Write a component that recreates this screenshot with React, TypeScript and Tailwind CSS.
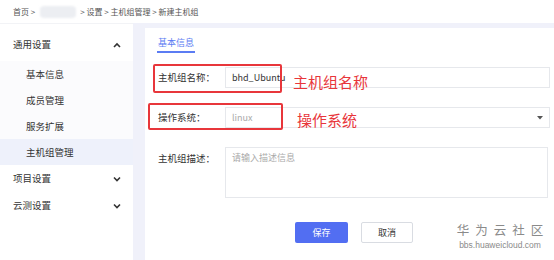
import React from "react";

const font = { fontFamily: '"Noto Sans CJK SC", "Noto Sans", sans-serif' };

function Chevron({ up }: { up?: boolean }) {
  return (
    <svg width="8" height="6" viewBox="0 0 8 6" className="text-[#333]">
      {up ? (
        <path d="M1 5 L4 2 L7 5" fill="none" stroke="currentColor" strokeWidth="1.6" />
      ) : (
        <path d="M1 1.5 L4 4.5 L7 1.5" fill="none" stroke="currentColor" strokeWidth="1.6" />
      )}
    </svg>
  );
}

export default function App() {
  return (
    <div style={font} className="w-[554px] h-[260px] bg-[#f0f1fa] overflow-hidden flex flex-col text-[#333]">
      {/* breadcrumb */}
      <div className="h-[23px] bg-white flex items-center pl-[13px] text-[8px] text-[#555] shrink-0 whitespace-nowrap">
        <span>首页 &gt;</span>
        <span className="ml-[5px] w-[36px] h-[12px] rounded-[4px] bg-[#eceef2] blur-[1px]" />
        <span className="ml-[4px]">&gt; 设置 &gt; 主机组管理 &gt; 新建主机组</span>
      </div>
      <div className="flex flex-1 min-h-0">
        {/* sidebar */}
        <div className="w-[133px] bg-white border-t border-[#f2f3f6] text-[9.5px] shrink-0 whitespace-nowrap">
          <div className="h-[33px] mt-[4px] flex items-center justify-between pl-[13px] pr-[12px]">
            <span>通用设置</span>
            <Chevron up />
          </div>
          <div className="bg-[#fbfbfd]">
            <div className="h-[26px] flex items-center pl-[26px]">基本信息</div>
            <div className="h-[26px] flex items-center pl-[26px]">成员管理</div>
            <div className="h-[26px] flex items-center pl-[26px]">服务扩展</div>
            <div className="h-[26px] flex items-center pl-[26px] bg-[#eef1fb]">主机组管理</div>
          </div>
          <div className="h-[27px] flex items-center justify-between pl-[13px] pr-[12px]">
            <span>项目设置</span>
            <Chevron />
          </div>
          <div className="h-[27px] flex items-center justify-between pl-[13px] pr-[12px]">
            <span>云测设置</span>
            <Chevron />
          </div>
        </div>
        {/* main */}
        <div className="flex-1 ml-[12px] mt-[5px] bg-white relative text-[9.5px] whitespace-nowrap">
          <div className="ml-[12px] mt-[9px] w-[38px] h-[16px] border-b-2 border-[#5b7cf3] text-[#5b7cf3] flex items-start justify-center leading-[11px] text-[9px]">
            基本信息
          </div>
          <div className="pl-[13px] pr-[4px]">
            <div className="flex items-center mt-[14px] h-[21px]">
              <div className="w-[67px]">主机组名称：</div>
              <div className="flex-1 h-[21px] border border-[#e6e8ec] flex items-center pl-[6px] text-[#333] text-[9px]">bhd_Ubuntu</div>
            </div>
            <div className="flex items-center mt-[19px] h-[21px]">
              <div className="w-[67px]">操作系统：</div>
              <div className="flex-1 h-[21px] border border-[#e6e8ec] flex items-center justify-between pl-[6px] pr-[6px] text-[#aaa] text-[9px]">
                <span>linux</span>
                <svg width="6" height="4" viewBox="0 0 6 4">
                  <path d="M0 0 L6 0 L3 3.5 Z" fill="#555" />
                </svg>
              </div>
            </div>
            <div className="flex items-start mt-[19px]">
              <div className="w-[67px] mt-[4px]">主机组描述：</div>
              <div className="flex-1 h-[51px] border border-[#e6e8ec] pl-[6px] pt-[3px] text-[#aaa] text-[9px] mr-[2px]">请输入描述信息</div>
            </div>
            <div className="flex items-center mt-[24px]">
              <button className="ml-[137px] w-[53px] h-[21px] bg-[#526ef2] text-white text-[9px] rounded-[2px]">保存</button>
              <button className="ml-[13px] w-[52px] h-[21px] bg-white border border-[#d9dce2] text-[9px] rounded-[2px] text-[#333]">取消</button>
            </div>
          </div>

          {/* annotations */}
          <div className="absolute left-[8px] top-[36px] w-[129px] h-[29px] border-2 border-[#e8363b] rounded-[2px]" />
          <div className="absolute left-[3px] top-[75px] w-[135px] h-[27px] border-2 border-[#e8363b] rounded-[2px]" />
          <div className="absolute left-[148px] top-[44px] text-[15px] leading-[20px] text-[#e8363b]">主机组名称</div>
          <div className="absolute left-[152px] top-[82px] text-[15px] leading-[20px] text-[#e8363b]">操作系统</div>

          {/* watermark */}
          <div className="absolute left-[312px] top-[194px] w-[86px] flex flex-col items-center text-[#8a8a8a]">
            <div className="text-[12.5px] leading-[16px] tracking-[6px] pl-[6px]">华为云社区</div>
            <div className="text-[8.5px] leading-[11px] mt-[2px]" style={{ fontFamily: '"Liberation Sans", sans-serif' }}>bbs.huaweicloud.com</div>
          </div>
        </div>
      </div>
    </div>
  );
}
